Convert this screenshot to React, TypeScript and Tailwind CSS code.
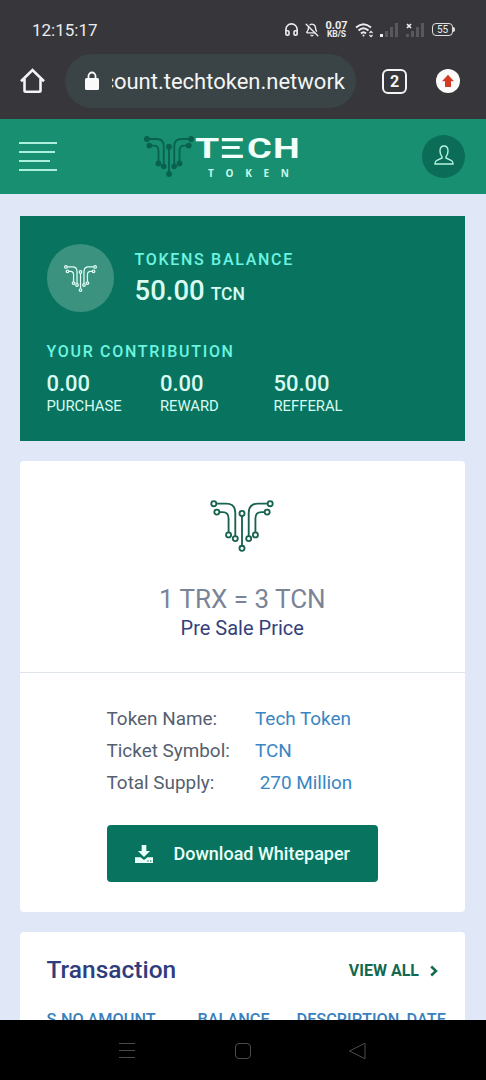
import React from 'react';
import { BellOff, Headphones } from 'lucide-react';

type MarkProps = {
  className: string;
  strokeWidth?: number;
  nodeFill?: string;
};

const nodes = [
  [193, 72],
  [202, 97],
  [237, 165],
  [257, 176],
  [277, 101],
  [277, 205],
  [297, 176],
  [317, 165],
  [352, 97],
  [361, 72],
];

const contributions = [
  { value: '0.00', label: 'PURCHASE' },
  { value: '0.00', label: 'REWARD' },
  { value: '50.00', label: 'REFFERAL' },
];

const tokenInfo = [
  { label: 'Token Name:', value: 'Tech Token' },
  { label: 'Ticket Symbol:', value: 'TCN' },
  { label: 'Total Supply:', value: '\u00a0270 Million' },
];

function CircuitMark({ className, strokeWidth = 5, nodeFill = 'none' }: MarkProps) {
  return (
    <svg viewBox="182 61 190 155" className={className} fill="none" stroke="currentColor" strokeWidth={strokeWidth}>
      <path d="M201 72H230Q257 72 257 100V168" />
      <path d="M210 97H219Q237 97 237 116V157" />
      <path d="M277 109V197" />
      <path d="M353 72H324Q297 72 297 100V168" />
      <path d="M344 97H335Q317 97 317 116V157" />
      {nodes.map(([x, y]) => (
        <circle key={`${x}-${y}`} cx={x} cy={y} r="7.5" fill={nodeFill} />
      ))}
    </svg>
  );
}

function SignalBars({ first = '#59595d', missing = false }: { first?: string; missing?: boolean }) {
  return (
    <svg viewBox="0 0 18 16" className="h-4 w-[18px]" fill="#59595d">
      <rect x="0" y="12" width="3" height="3" fill={first} />
      <rect x="5" y="9" width="3" height="6" />
      <rect x="10" y="5" width="3" height="10" />
      <rect x="15" y="1" width="3" height="14" />
      {missing && <path d="M1 2l4 4M5 2l-4 4" stroke="#f1f1f1" strokeWidth="1.6" />}
    </svg>
  );
}

function StatusBar() {
  return (
    <div className="flex h-[54px] items-center pt-[5px] pl-8 text-[#ececee]">
      <span className="w-[252px] text-[17px] leading-5">12:15:17</span>
      <Headphones size={15} strokeWidth={2.6} />
      <BellOff size={14} strokeWidth={2.4} className="ml-[6px]" />
      <div className="ml-[6px] w-[23px] text-center font-bold">
        <div className="text-[11px] leading-[9px]">0.07</div>
        <div className="text-[8.500px] leading-[9px]">KB/S</div>
      </div>
      <svg viewBox="0 0 20 16" className="ml-[7px] h-4 w-5" fill="none" stroke="currentColor" strokeWidth="1.9">
        <path d="M1 5.5Q8.500 -1 16 5.500M3.500 8.500Q8.500 4 13.500 8.500M6 11.500Q8.500 9 11 11.500" />
        <circle cx="8.500" cy="13.500" r="1" fill="currentColor" stroke="none" />
        <path d="M14.500 11l1.500-1.700 1.500 1.700M14.500 13l1.500 1.700 1.500-1.700" strokeWidth="1.2" />
      </svg>
      <div className="ml-[5px] flex gap-[8px]">
        <SignalBars first="#f1f1f1" />
        <SignalBars missing />
      </div>
      <div className="ml-[8px] flex h-[13px] w-[21px] items-center justify-center rounded-[4px] border-[1.5px] border-[#dededf] text-[10px] leading-none">
        55
      </div>
      <div className="h-[5px] w-[2px] rounded-r bg-[#dededf]" />
    </div>
  );
}

function AddressBar() {
  return (
    <div className="flex h-[65px] items-start">
      <svg viewBox="0 0 26 26" className="mt-[14px] ml-[20px] h-[26px] w-[26px]" fill="none" stroke="#f4f4f5" strokeWidth="2.6">
        <path d="M1 13.200L12.500 2 24 13.200M4.500 11V22.500Q4.500 23.700 5.700 23.700H19.300Q20.500 23.700 20.500 22.500V11" />
      </svg>
      <div className="ml-[19px] flex h-[54px] w-[291px] items-center rounded-full bg-[#3a4345] pl-[19px]">
        <svg viewBox="0 0 16 20" className="h-5 w-4" fill="#fafafa">
          <rect x="1" y="7" width="14" height="12" rx="1.500" />
          <path d="M4.500 8V5a3.500 3.500 0 0 1 7 0v3" fill="none" stroke="#fafafa" strokeWidth="1.800" />
        </svg>
        <div className="ml-[12px] flex w-[233px] justify-end overflow-hidden pt-px text-[22px] leading-[30px] whitespace-nowrap text-[#f3f5f5]">
          count.techtoken.network
        </div>
      </div>
      <div className="mt-[15px] ml-[26px] flex h-[25px] w-[25px] items-center justify-center rounded-[6px] border-[2.5px] border-[#f4f4f5] text-[16px] leading-none font-bold text-[#f4f4f5]">
        2
      </div>
      <div className="mt-[15px] ml-[29px] flex h-6 w-6 items-center justify-center rounded-full bg-[#fbfbfb]">
        <svg viewBox="0 0 14 14" className="h-[14px] w-[14px]" fill="#d23c26">
          <path d="M7 0.800L13 7.200H10V13H4V7.200H1Z" />
        </svg>
      </div>
    </div>
  );
}

// The E is clipped on the left so only its three bars show
function Wordmark() {
  return (
    <div className="flex h-[30px] text-[27px] leading-[30px] font-bold text-[#f1fffb]">
      <span className="w-[26px] origin-left scale-x-[1.450]">T</span>
      <span className="w-[26px]">
        <span className="-ml-[14px] inline-block origin-left scale-x-[2.450] [clip-path:inset(0_0_0_40%)]">E</span>
      </span>
      <span className="w-[26px] origin-left scale-x-[1.400]">C</span>
      <span className="w-[26px] origin-left scale-x-[1.400]">H</span>
    </div>
  );
}

function SiteHeader() {
  return (
    <header className="flex h-[75px] shrink-0 bg-[#188f71]">
      <button className="mt-[23px] ml-[19px] flex h-[29px] w-[39px] flex-col justify-between">
        <span className="h-[1.5px] w-[38px] bg-[#aaf0dc]" />
        <span className="h-[1.5px] w-[36px] bg-[#aaf0dc]" />
        <span className="h-[1.5px] w-[31px] bg-[#aaf0dc]" />
        <span className="h-[1.5px] w-[38px] bg-[#aaf0dc]" />
      </button>
      <CircuitMark className="mt-[17px] ml-[86px] h-[41px] w-[50px] text-[#09624f]" strokeWidth={7} nodeFill="#09624f" />
      <div className="w-[107px] pt-[15px] pl-px">
        <Wordmark />
        <div className="mt-[3px] pl-[13px] font-['Open_Sans',sans-serif] text-[10px] leading-[12px] font-bold tracking-[11.700px] whitespace-nowrap text-[#c9f7e9]">
          TOKEN
        </div>
      </div>
      <div className="mt-[16px] ml-[121px] flex h-[43px] w-[43px] items-center justify-center rounded-full bg-[#0b6d58]">
        <svg viewBox="0 0 20 20" className="mb-[3px] h-5 w-5" fill="none" stroke="#b5f3e1" strokeWidth="1.400">
          <path d="M8 11.800V13L2.500 15.500Q1 16.500 1 19H19Q19 16.500 17.500 15.500L12 13V11.800Q14 9.500 14 6Q14 1 10 1T6 6Q6 9.500 8 11.800Z" />
        </svg>
      </div>
    </header>
  );
}

function BalanceCard() {
  return (
    <section className="h-[225px] bg-[#08745f] px-[27px] pt-[28px] text-[#d8fbf2]">
      <div className="flex items-start">
        <div className="flex h-[68px] w-[67.500px] items-center justify-center rounded-full bg-[#3a927f]">
          <CircuitMark className="h-[27px] w-[33px] text-[#e3fff7]" strokeWidth={7} />
        </div>
        <div className="ml-[20.500px] pt-[4px]">
          <div className="text-[16px] leading-6 font-medium tracking-[1.700px] text-[#6cf3e1]">TOKENS BALANCE</div>
          <div className="text-[27.500px] leading-[38px] font-medium">
            50.00<span className="ml-[6px] text-[17.500px]">TCN</span>
          </div>
        </div>
      </div>
      <div className="mt-[27px] text-[16px] leading-6 font-medium tracking-[1.700px] text-[#6cf3e1]">YOUR CONTRIBUTION</div>
      <div className="mt-[6px] flex">
        {contributions.map((item) => (
          <div key={item.label} className="w-[113.500px]">
            <div className="text-[22px] leading-7 font-medium">{item.value}</div>
            <div className="-mt-px text-[14.800px] leading-[18px]">{item.label}</div>
          </div>
        ))}
      </div>
    </section>
  );
}

function TokenCard() {
  return (
    <section className="mt-5 h-[451px] rounded bg-white">
      <div className="flex h-[212px] flex-col items-center border-b border-[#dfe4ea] pt-[39px]">
        <CircuitMark className="h-[52px] w-[64px] text-[#17634f]" strokeWidth={5.5} />
        <div className="mt-[31px] text-[26px] leading-[33px] text-[#7b8497]">1 TRX = 3 TCN</div>
        <div className="text-[20px] leading-6 text-[#353f7c]">Pre Sale Price</div>
      </div>
      <div className="pt-[30px] pl-[87px] text-[18.900px] leading-8">
        {tokenInfo.map((row) => (
          <div key={row.label} className="flex">
            <span className="w-[148.500px] text-[#55606f]">{row.label}</span>
            <span className="text-[#3a86c3]">{row.value}</span>
          </div>
        ))}
        <button className="mt-[26px] flex h-[57px] w-[271px] items-center rounded-[4px] bg-[#08745f] pl-[28px] text-[18px] font-medium text-[#eafff9]">
          <svg viewBox="0 0 18 18" className="h-[18px] w-[18px]" fill="currentColor">
            <path d="M6.700 0H11.300V6H15L9 12 3 6H6.700Z" />
            <path d="M0 12.300H5.500L9 15 12.500 12.300H18V18H0Z" />
            <circle cx="13" cy="16" r="0.700" fill="#08745f" />
            <circle cx="15.700" cy="16" r="0.700" fill="#08745f" />
          </svg>
          <span className="ml-[21px]">Download Whitepaper</span>
        </button>
      </div>
    </section>
  );
}

function TransactionCard() {
  return (
    <section className="mt-5 h-[200px] rounded bg-white px-[27px] pt-[22px]">
      <div className="flex h-8 items-center">
        <h2 className="text-[24.500px] leading-8 font-medium text-[#2f3d7d]">Transaction</h2>
        <a href="#" className="ml-auto flex items-center pt-[2px] text-[16px] leading-8 font-bold text-[#13694f]">
          VIEW ALL
          <svg viewBox="0 0 8 12" className="ml-[11px] h-[12px] w-[8px]" fill="none" stroke="currentColor" strokeWidth="2.500">
            <path d="M1.200 1.500L6 6 1.200 10.500" />
          </svg>
        </a>
      </div>
      <div className="mt-[22px] flex text-[16.300px] leading-6 font-medium whitespace-nowrap text-[#3a80bd]">
        <span className="w-[41px] shrink-0">S.NO</span>
        <span className="w-[110px] shrink-0">AMOUNT</span>
        <span className="w-[99px] shrink-0">BALANCE</span>
        <span className="w-[110px] shrink-0">DESCRIPTION</span>
        <span className="shrink-0">DATE</span>
      </div>
    </section>
  );
}

function NavigationBar() {
  return (
    <nav className="flex h-[60px] shrink-0 items-center bg-black pt-px pl-[118px] text-[#4b4b4b]">
      <svg viewBox="0 0 18 18" className="h-[18px] w-[18px]" stroke="currentColor">
        <path d="M1 1.500H17M1 8.500H17M1 15.500H17" />
      </svg>
      <div className="ml-[99px] h-4 w-4 rounded-[4px] border border-[#4b4b4b]" />
      <svg viewBox="0 0 18 18" className="ml-[97px] h-[18px] w-[18px]" fill="none" stroke="currentColor">
        <path d="M17 1.200V16.800L1.500 9Z" />
      </svg>
    </nav>
  );
}

export default function App() {
  return (
    <div className="flex h-[1080px] w-[486px] flex-col overflow-hidden bg-[#e0e7f6] font-[Roboto,sans-serif]">
      <div className="h-[119px] shrink-0 bg-[#37373b]">
        <StatusBar />
        <AddressBar />
      </div>
      <SiteHeader />
      <main className="min-h-0 flex-1 overflow-hidden pt-[22px] pr-[21px] pl-[19.500px]">
        <BalanceCard />
        <TokenCard />
        <TransactionCard />
      </main>
      <NavigationBar />
    </div>
  );
}
